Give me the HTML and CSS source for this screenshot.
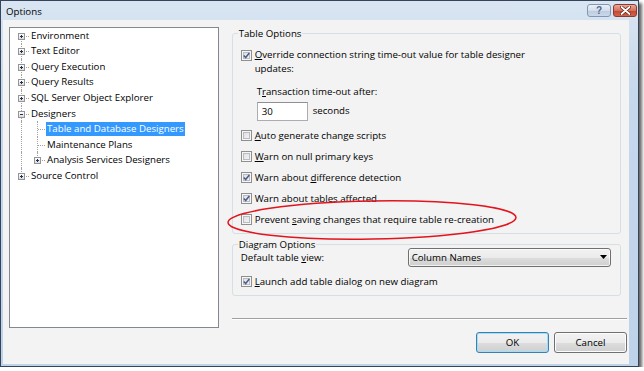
FILE: index.html
```html
<!DOCTYPE html>
<html>
<head>
<meta charset="utf-8">
<link rel="stylesheet" href="styles.css">
</head>
<body>
<div class="window">
  <div class="titlebar">
    <span class="title">Options</span>
    <div class="caption">
      <div class="cap-btn help">?</div>
      <div class="cap-btn close"><svg width="11" height="9" viewBox="0 0 11 9"><path d="M1.5 1 L9.5 8 M9.5 1 L1.5 8" stroke="#5a1a10" stroke-width="3.2" stroke-linecap="round"/><path d="M1.5 1 L9.5 8 M9.5 1 L1.5 8" stroke="#fff" stroke-width="1.8" stroke-linecap="round"/></svg></div>
    </div>
  </div>
  <div class="client">
    <div class="tree">
      <div class="row first"><span class="g"><i class="exp plus"></i></span><span class="lbl">Environment</span></div>
      <div class="row"><span class="g"><i class="exp plus"></i></span><span class="lbl">Text Editor</span></div>
      <div class="row"><span class="g"><i class="exp plus"></i></span><span class="lbl">Query Execution</span></div>
      <div class="row"><span class="g"><i class="exp plus"></i></span><span class="lbl">Query Results</span></div>
      <div class="row"><span class="g"><i class="exp plus"></i></span><span class="lbl">SQL Server Object Explorer</span></div>
      <div class="row"><span class="g"><i class="exp minus"></i></span><span class="lbl">Designers</span></div>
      <div class="row"><span class="g vl"></span><span class="g"></span><span class="lbl sel">Table and Database Designers</span></div>
      <div class="row"><span class="g vl"></span><span class="g"></span><span class="lbl">Maintenance Plans</span></div>
      <div class="row"><span class="g vl"></span><span class="g last"><i class="exp plus"></i></span><span class="lbl">Analysis Services Designers</span></div>
      <div class="row"><span class="g last"><i class="exp plus"></i></span><span class="lbl">Source Control</span></div>
    </div>
    <div class="pane">
      <fieldset class="group table-opts">
        <legend>Table Options</legend>
        <div class="check top">
          <span class="cb on"><svg width="7" height="7" viewBox="0 0 7 7"><path d="M0.8 3.4 L2.7 5.5 L6.3 1" stroke="#4b5e8e" stroke-width="1.5" fill="none"/></svg></span>
          <span class="ctext"><u>O</u>verride connection string time-out value for table designer<br>updates:</span>
        </div>
        <div class="sub trans">T<u>r</u>ansaction time-out after:</div>
        <div class="sub timeout"><span class="textbox">30</span><span>seconds</span></div>
        <div class="checks">
          <div class="check"><span class="cb"></span><span class="ctext"><u>A</u>uto generate change scripts</span></div>
          <div class="check"><span class="cb"></span><span class="ctext"><u>W</u>arn on null primary keys</span></div>
          <div class="check"><span class="cb on"><svg width="7" height="7" viewBox="0 0 7 7"><path d="M0.8 3.4 L2.7 5.5 L6.3 1" stroke="#4b5e8e" stroke-width="1.5" fill="none"/></svg></span><span class="ctext">Warn about <u>d</u>ifference detection</span></div>
          <div class="check"><span class="cb on"><svg width="7" height="7" viewBox="0 0 7 7"><path d="M0.8 3.4 L2.7 5.5 L6.3 1" stroke="#4b5e8e" stroke-width="1.5" fill="none"/></svg></span><span class="ctext">Warn about <u>t</u>ables affected</span></div>
          <div class="check"><span class="cb"></span><span class="ctext">Prevent <u>s</u>aving changes that require table re-creation</span></div>
        </div>
      </fieldset>
      <fieldset class="group diagram-opts">
        <legend>Diagram Options</legend>
        <div class="view-row">
          <span>Default table <u>v</u>iew:</span>
          <div class="select"><span>Column Names</span><svg width="7" height="4" viewBox="0 0 7 4"><path d="M0 0 H7 L3.5 4 Z" fill="#000"/></svg></div>
        </div>
        <div class="check launch"><span class="cb on"><svg width="7" height="7" viewBox="0 0 7 7"><path d="M0.8 3.4 L2.7 5.5 L6.3 1" stroke="#4b5e8e" stroke-width="1.5" fill="none"/></svg></span><span class="ctext"><u>L</u>aunch add table dialog on new diagram</span></div>
      </fieldset>
      <div class="separator"></div>
      <div class="buttons">
        <div class="button default">OK</div>
        <div class="button">Cancel</div>
      </div>
    </div>
  </div>
  <svg class="ellipse" width="310" height="52" viewBox="0 0 310 52"><ellipse cx="155" cy="26" rx="144" ry="19" transform="rotate(-1 155 26)" fill="none" stroke="#e3141c" stroke-width="1.5"/></svg>
</div>
</body>
</html>
```
FILE: styles.css
```css
* { box-sizing: border-box; }
body {
  margin: 0;
  background: #fff;
  font-family: "Open Sans", "Noto Sans", sans-serif;
  font-size: 9.7px;
  color: #000;
}
u { text-decoration: underline; text-underline-offset: 1px; }

.window {
  position: relative;
  width: 639px;
  height: 367px;
  border: 1px solid #34445a;
  background: linear-gradient(#d9e5f2, #c6d8ec 25%, #bed2e9);
  box-shadow: 3px 3px 3px rgba(0,0,0,0.6);
  display: flex;
  flex-direction: column;
}
.titlebar {
  height: 19px;
  display: flex;
  align-items: flex-start;
  justify-content: space-between;
  padding: 0 1px 0 5px;
}
.title { line-height: 22px; }
.caption { display: flex; gap: 2px; margin-top: 3px; }
.cap-btn {
  height: 13px;
  border-radius: 3px;
  display: flex;
  align-items: center;
  justify-content: center;
}
.help {
  width: 24px;
  border: 1px solid #8397b1;
  background: linear-gradient(#e9f0f8, #d3dfec 50%, #bccbdd 51%, #c9d8ea);
  color: #53678a;
  font-family: "Liberation Sans", sans-serif;
  font-weight: bold;
  font-size: 10px;
}
.close {
  width: 24px;
  border: 1px solid #8a3a2e;
  background: linear-gradient(#eaa99a, #d6705d 50%, #c2462f 51%, #d2624a);
}

.client {
  flex: 1;
  margin: 0 9px 2px 2px;
  background: #f3f3f3;
  display: flex;
  padding: 7px 0 0 6px;
}
.tree {
  width: 210px;
  height: 301px;
  border: 1px solid #828790;
  background: #fff;
  padding-left: 3px;
}
.row {
  height: 15.55px;
  display: flex;
  align-items: stretch;
}
.g { width: 16px; position: relative; flex: none; }
.g::before {
  content: "";
  position: absolute;
  left: 8px; top: 0; bottom: 0;
  border-left: 1px dotted #a3a3a3;
}
.row.first .g::before { top: 50%; }
.g.last::before { bottom: 50%; }
.g::after {
  content: "";
  position: absolute;
  left: 9px; right: 0; top: 50%;
  border-top: 1px dotted #a3a3a3;
}
.g.vl::after { display: none; }
.exp {
  position: absolute;
  left: 5px;
  top: calc(50% - 3px);
  width: 7px; height: 7px;
  border: 1px solid #959595;
  background: linear-gradient(#ffffff, #dcdcdc);
  z-index: 1;
}
.exp::before {
  content: "";
  position: absolute;
  left: 1px; top: 2px; width: 3px; height: 1px;
  background: #22324e;
}
.exp.plus::after {
  content: "";
  position: absolute;
  left: 2px; top: 1px; width: 1px; height: 3px;
  background: #22324e;
}
.lbl {
  margin-left: 1px;
  padding: 0 1px;
  line-height: 14px;
  align-self: center;
  white-space: nowrap;
}
.lbl.sel { background: #3399ff; color: #fff; }

.pane {
  width: 398px;
  margin-left: 13px;
  display: flex;
  flex-direction: column;
}
.group {
  margin: 0;
  width: 389px;
  border: 1px solid #d5dfe5;
  border-radius: 3px;
  padding: 0 8px;
  min-width: 0;
}
.group legend {
  padding: 0 1px;
  margin-left: -3px;
  line-height: 13px;
}
.table-opts { padding-top: 8.25px; padding-bottom: 7px; }
.check { display: flex; align-items: center; gap: 3px; }
.check.top { align-items: flex-start; }
.check.top .cb { margin-top: 1.5px; }
.ctext { line-height: 13.5px; }
.cb {
  width: 11px; height: 11px;
  flex: none;
  border: 1px solid #8e8f8f;
  box-shadow: inset 0 0 0 1px #f6f6f6, inset 0 0 0 2px #b9bcc1;
  background: linear-gradient(135deg, #d9d9d9, #fafafa);
  display: flex;
  padding: 1px;
}
.sub { margin-left: 16px; line-height: 13.5px; }
.trans { margin-top: 9.75px; }
.timeout { margin-top: 3.2px; display: flex; align-items: center; gap: 5px; }
.textbox {
  width: 51px; height: 19px;
  border: 1px solid #abadb3;
  border-top-color: #8e9096;
  background: #fff;
  padding-left: 4px;
  line-height: 17px;
}
.checks { margin-top: 8.25px; display: flex; flex-direction: column; gap: 7.45px; }

.diagram-opts { margin-top: 4px; padding-bottom: 6px; }
.view-row {
  margin-top: -3.5px;
  height: 19px;
  display: flex;
  align-items: center;
  justify-content: space-between;
  margin-right: 1px;
}
.select {
  width: 203px; height: 19px;
  border: 1px solid #707070;
  border-radius: 3px;
  background: linear-gradient(#f2f2f2, #ebebeb 50%, #dddddd 51%, #cfcfcf);
  box-shadow: inset 0 0 0 1px rgba(255,255,255,0.7);
  display: flex;
  align-items: center;
  justify-content: space-between;
  padding: 0 3px 0 3px;
}
.launch { margin-top: 8.5px; }

.separator {
  margin-top: 22px;
  height: 2px;
  border-top: 1px solid #a0a0a0;
  border-bottom: 1px solid #fff;
  margin-right: 2px;
}
.buttons {
  margin-top: 12px;
  display: flex;
  justify-content: flex-end;
  gap: 5px;
  padding-right: 2px;
}
.button {
  width: 73px; height: 21px;
  border: 1px solid #707070;
  border-radius: 3px;
  background: linear-gradient(#f2f2f2, #ebebeb 50%, #dddddd 51%, #cfcfcf);
  box-shadow: inset 0 0 0 1px #fcfcfc;
  display: flex;
  align-items: center;
  justify-content: center;
}
.button.default {
  border-color: #3c7fb1;
  box-shadow: inset 0 0 0 1px #9fe0f8;
}
.ellipse {
  position: absolute;
  left: 216px;
  top: 193px;
}
```
